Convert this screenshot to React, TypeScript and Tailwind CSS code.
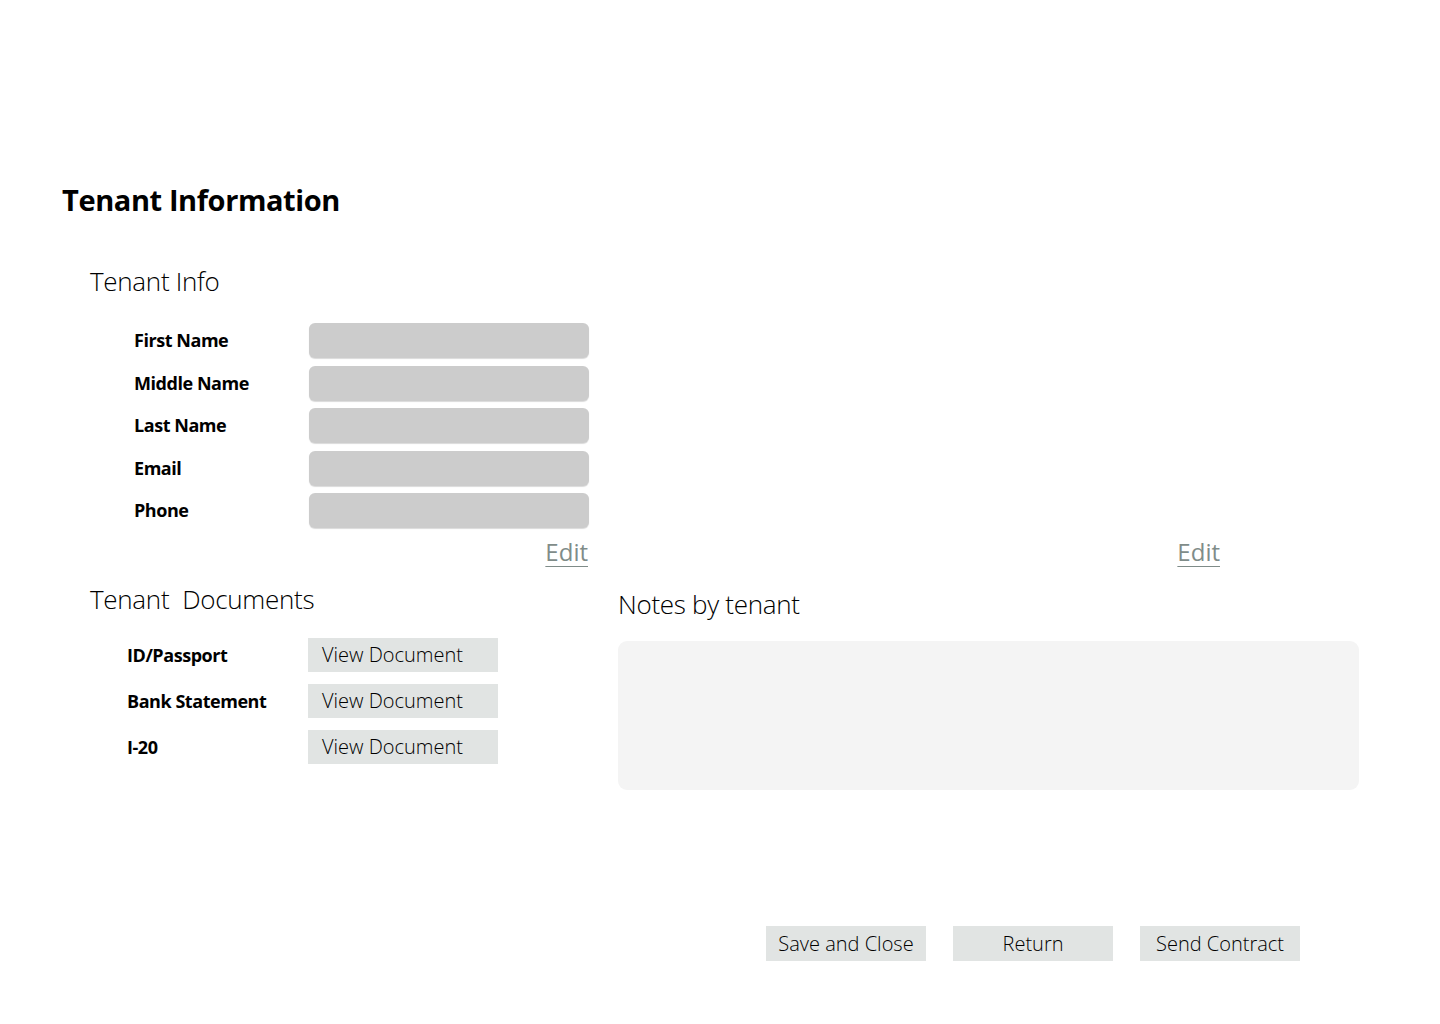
import type { ReactElement } from "react";

const fields = ["First Name", "Middle Name", "Last Name", "Email", "Phone"];
const docs = ["ID/Passport", "Bank Statement", "I-20"];
const actions = ["Save and Close", "Return", "Send Contract"];

function EditLink({ className }: { className?: string }): ReactElement {
  return (
    <a
      href="#"
      className={`text-[24px] leading-[24px] text-[#7f8c89] underline decoration-1 underline-offset-[5px] ${className ?? ""}`}
    >
      Edit
    </a>
  );
}

export default function App(): ReactElement {
  return (
    <div
      className="w-[1440px] h-[1024px] bg-white text-black"
      style={{ fontFamily: '"Open Sans", "Noto Sans", sans-serif' }}
    >
      <div className="pt-[180px] pl-[62px]">
        <h1 className="text-[29px] leading-[40px] font-bold tracking-[-0.4px]">Tenant Information</h1>
      </div>

      <section className="pl-[90px] mt-[44px]">
        <h2 className="text-[26px] leading-[34px] font-light tracking-[-0.3px]">Tenant Info</h2>
        <div className="mt-[25px] flex flex-col gap-[7.5px] pl-[44px]">
          {fields.map((f) => (
            <div key={f} className="flex items-center">
              <span className="w-[175px] text-[18px] font-bold tracking-[-0.45px]">{f}</span>
              <div className="w-[280px] h-[35px] rounded-[6px] bg-[#cccccc] shadow-[0_1px_1px_rgba(0,0,0,0.15)]" />
            </div>
          ))}
        </div>
      </section>

      <div className="mt-[12px] flex">
        <div className="w-[588px] flex justify-end">
          <EditLink />
        </div>
        <div className="w-[632px] flex justify-end">
          <EditLink />
        </div>
      </div>

      <div className="mt-[18px] flex">
        <section className="pl-[90px] w-[618px]">
          <h2 className="text-[26px] leading-[34px] font-light tracking-[-0.3px] whitespace-pre">Tenant  Documents</h2>
          <div className="mt-[22px] pl-[37px] flex flex-col gap-[12px]">
            {docs.map((d) => (
              <div key={d} className="flex items-center">
                <span className="w-[181px] text-[18px] font-bold tracking-[-0.45px]">{d}</span>
                <button className="w-[190px] h-[34px] bg-[#e1e4e3] text-left pl-[14px] text-[20px] font-light">
                  View Document
                </button>
              </div>
            ))}
          </div>
        </section>
        <section className="w-[741px] mt-[5px]">
          <h2 className="text-[26px] leading-[34px] font-light tracking-[-0.3px]">Notes by tenant</h2>
          <div className="mt-[20px] h-[149px] rounded-[9px] bg-[#f4f4f4]" />
        </section>
      </div>

      <div className="mt-[136px] pl-[766px] flex gap-[27px]">
        {actions.map((a) => (
          <button key={a} className="w-[160px] h-[35px] bg-[#e1e4e3] text-[20px] font-light">
            {a}
          </button>
        ))}
      </div>
    </div>
  );
}
